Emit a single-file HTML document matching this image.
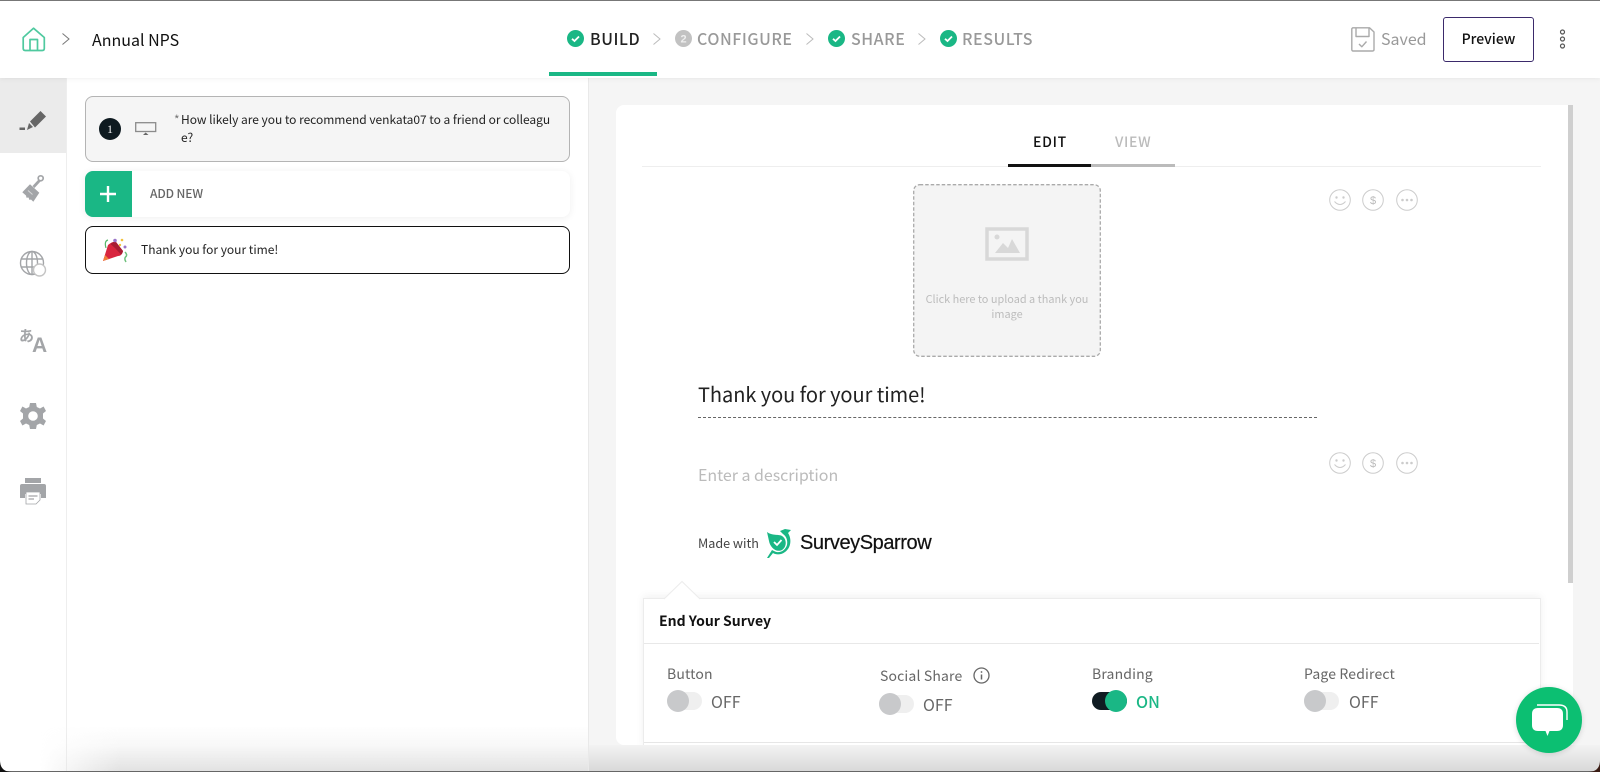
<!DOCTYPE html>
<html lang="en">
<head>
<meta charset="utf-8">
<title>Annual NPS</title>
<style>
html,body{margin:0;padding:0;background:#fff}
body{width:1600px;height:772px;position:relative;overflow:hidden;font-family:"Noto Sans CJK SC","Liberation Sans",sans-serif;color:#111}
.a{position:absolute}
.t{position:absolute;white-space:nowrap;line-height:20px;height:20px}
.step{font-size:16px;font-weight:500;letter-spacing:.55px;color:#999}
.lbl{font-size:14px;color:#666;letter-spacing:.15px}
.off{font-size:16px;color:#666}
.track{position:absolute;width:35px;height:18px;border-radius:9px;background:#efefef}
.knob{position:absolute;width:22px;height:22px;border-radius:50%;background:#c8c9cb}
svg{position:absolute;overflow:visible}
</style>
</head>
<body>
<!-- backgrounds -->
<div class="a" style="left:589px;top:78px;width:1011px;height:694px;background:#f5f5f5"></div>
<div class="a" style="left:66px;top:78px;width:1px;height:694px;background:#eee"></div>
<div class="a" style="left:588px;top:78px;width:1px;height:694px;background:#e9e9e9"></div>
<div class="a" style="left:0;top:78px;width:66px;height:75px;background:#ebebeb"></div>
<div class="a" style="left:0;top:0;width:1600px;height:78px;background:#fff;box-shadow:0 1px 5px rgba(0,0,0,.06)"></div>
<div class="a" style="left:0;top:0;width:1600px;height:1px;background:#777"></div>

<!-- header left -->
<svg style="left:22px;top:27px" width="24" height="25" viewBox="0 0 24 25" fill="none" stroke="#4fc99f" stroke-width="1.7" stroke-linejoin="round"><path d="M1.2 10.5 11.5 1.2 22.3 10.5V21.5q0 2-2 2H3.2q-2 0-2-2Z"/><path d="M8 23.5V12.5H15.5V23.5"/></svg>
<svg style="left:62px;top:33px" width="8" height="12" fill="none" stroke="#777" stroke-width="1"><path d="M.5.5 7 6 .5 11.5"/></svg>
<div class="t" style="left:92px;top:29px;font-size:16px">Annual NPS</div>

<!-- stepper -->
<svg style="left:567px;top:30px" width="17" height="17"><circle cx="8.500" cy="8.500" r="8.500" fill="#1ab785"/><path d="M5 8.800 7.500 11 12 6.500" fill="none" stroke="#fff" stroke-width="1.800"/></svg>
<div class="t step" style="left:590px;top:28px;color:#222">BUILD</div>
<svg style="left:653px;top:33px" width="8" height="12" fill="none" stroke="#bbb" stroke-width="1"><path d="M.5.5 7 6 .5 11.5"/></svg>
<svg style="left:675px;top:30px" width="17" height="17"><circle cx="8.500" cy="8.500" r="8.500" fill="#c2c2c2"/><text x="8.500" y="12.500" font-size="11" font-weight="700" text-anchor="middle" fill="#eee" font-family="Liberation Sans, sans-serif">2</text></svg>
<div class="t step" style="left:697px;top:28px">CONFIGURE</div>
<svg style="left:806px;top:33px" width="8" height="12" fill="none" stroke="#bbb" stroke-width="1"><path d="M.5.5 7 6 .5 11.5"/></svg>
<svg style="left:828px;top:30px" width="17" height="17"><circle cx="8.500" cy="8.500" r="8.500" fill="#1ab785"/><path d="M5 8.800 7.500 11 12 6.500" fill="none" stroke="#fff" stroke-width="1.800"/></svg>
<div class="t step" style="left:851px;top:28px">SHARE</div>
<svg style="left:918px;top:33px" width="8" height="12" fill="none" stroke="#bbb" stroke-width="1"><path d="M.5.5 7 6 .5 11.5"/></svg>
<svg style="left:940px;top:30px" width="17" height="17"><circle cx="8.500" cy="8.500" r="8.500" fill="#1ab785"/><path d="M5 8.800 7.500 11 12 6.500" fill="none" stroke="#fff" stroke-width="1.800"/></svg>
<div class="t step" style="left:962px;top:28px">RESULTS</div>
<div class="a" style="left:549px;top:72px;width:108px;height:4px;background:#1ab785"></div>

<!-- header right -->
<svg style="left:1351px;top:27px" width="24" height="25" fill="none" stroke="#aaa" stroke-width="1.400" stroke-linejoin="round"><path d="M1.700.8H18.500L23 5V22.500q0 1.500-1.500 1.500H2.200Q.8 24 .8 22.500V1.700Z"/><path d="M5 1V9.500H18V1"/><path d="M8 17 10.800 19.800 15.500 14.500"/></svg>
<div class="t" style="left:1381px;top:28px;font-size:16px;color:#999">Saved</div>
<div class="a" style="left:1443px;top:17px;width:89px;height:43px;border:1px solid #3b2a6b;border-radius:3px;text-align:center;line-height:42px;font-size:14px;font-weight:500;color:#111">Preview</div>
<svg style="left:1558px;top:29px" width="9" height="20" fill="none" stroke="#555" stroke-width="1.200"><circle cx="4.500" cy="3" r="2"/><circle cx="4.500" cy="10" r="2"/><circle cx="4.500" cy="17" r="2"/></svg>

<!-- sidebar icons -->
<svg style="left:18px;top:103px" width="30" height="30" fill="#666"><path d="M1.500 24.500H7V27H1.500Z"/><path d="M9 27 11 20 15 24Z"/><path d="M12 18.500 22.500 8 28 13.500 17 24.500Z"/></svg>
<svg style="left:20px;top:172px" width="28" height="32"><path d="M2.300 20.300 10 12.300 19.300 20.700 13.300 29.700 11 27.500 9.500 28 8.500 25.500 6.500 25.800 6 23.500Z" fill="#a3a5a8"/><path d="M12.500 14 14.500 16 20.500 9.500 18.500 7.500Z" fill="#a3a5a8"/><circle cx="20.700" cy="6.300" r="2.500" fill="none" stroke="#a3a5a8" stroke-width="1.700"/><path d="M8 18.500 12.500 22.500" stroke="#fff" stroke-width="1" opacity=".55"/></svg>
<svg style="left:19px;top:250px" width="30" height="30" fill="none" stroke="#a3a5a8" stroke-width="1.400"><circle cx="13" cy="13" r="11.500"/><ellipse cx="13" cy="13" rx="5.500" ry="11.500"/><path d="M2 9H24M2 17H24M13 1.500V24.500"/><circle cx="20.500" cy="20" r="6" fill="#fff" stroke="#c4c4c4"/></svg>
<div class="t" style="left:19px;top:326px;font-size:15px;font-weight:700;color:#a3a5a8">あ</div>
<div class="t" style="left:32px;top:336px;font-size:21px;font-weight:700;color:#a3a5a8;font-family:'Liberation Sans',sans-serif">A</div>
<svg style="left:19px;top:402px" width="28" height="28" viewBox="0 0 28 28"><path fill="#a3a5a8" fill-rule="evenodd" d="M11 1H17L17.800 5 21 6.500 24.600 4.500 27 9 24 11.500V16.500L27 19 24.600 23.500 21 21.500 17.800 23 17 27H11L10.200 23 7 21.500 3.400 23.500 1 19 4 16.500V11.500L1 9 3.400 4.500 7 6.500 10.200 5ZM14 9.200A4.800 4.800 0 1 0 14 18.800 4.800 4.800 0 1 0 14 9.200Z"/></svg>
<svg style="left:19px;top:477px" width="28" height="28" viewBox="0 0 28 28"><path fill="#a3a5a8" d="M6 1H22V6H6Z"/><path fill="#a3a5a8" d="M3 7H25Q27 7 27 9V21H22V17H6V21H1V9Q1 7 3 7Z"/><path fill="#fff" stroke="#a3a5a8" stroke-width=".8" d="M7 15H21V23L17 27H7Z"/><path stroke="#a3a5a8" stroke-width="1.200" d="M9.500 19H18.500M9.500 22H15"/></svg>

<!-- question card -->
<div class="a" style="left:85px;top:96px;width:483px;height:64px;background:#f5f5f5;border:1px solid #b4b4b4;border-radius:8px"></div>
<div class="a" style="left:99px;top:118px;width:22px;height:22px;border-radius:50%;background:#0e1a20;color:#f2f2f2;text-align:center;font:400 12px/22px 'Liberation Serif',serif">1</div>
<svg style="left:135px;top:122px" width="22" height="14" fill="none"><rect x=".7" y=".7" width="20" height="8.800" stroke="#8b8b8b" stroke-width="1.300"/><path d="M8 13 10.700 10.500 13.500 13Z" fill="#666"/></svg>
<div class="t" style="left:174px;top:110px;font-size:12px;color:#777">*</div>
<div class="t" style="left:181px;top:110px;font-size:12px;color:#222;letter-spacing:-.03px">How likely are you to recommend venkata07 to a friend or colleagu</div>
<div class="t" style="left:181px;top:128px;font-size:12px;color:#222">e?</div>

<!-- add new -->
<div class="a" style="left:85px;top:171px;width:485px;height:46px;background:#fff;border-radius:8px;box-shadow:0 1px 8px rgba(0,0,0,.07)"></div>
<div class="a" style="left:85px;top:171px;width:47px;height:46px;background:#1ab785;border-radius:8px 0 0 8px"></div>
<svg style="left:100px;top:186px" width="16" height="16" fill="none" stroke="#fff" stroke-width="2.400"><path d="M8 0V16M0 8H16"/></svg>
<div class="t" style="left:150px;top:184px;font-size:12px;font-weight:500;color:#666;letter-spacing:-.1px">ADD NEW</div>

<!-- thank you card -->
<div class="a" style="left:85px;top:226px;width:483px;height:46px;background:#fff;border:1px solid #111;border-radius:8px"></div>
<svg style="left:102px;top:238px" width="26" height="26"><path d="M1 23 6 7Q11 3 14 4L21 13Q20 18 16 18Z" fill="#d8253f"/><path d="M8.500 6Q11 3.500 14 4L21 13Q20.500 15.500 19 16.500L13 10Z" fill="#a81c33"/><path d="M3 17 7 21 1 23Z" fill="#ef7f3a"/><path d="M4 10Q2 3 6 2" fill="none" stroke="#55b86a" stroke-width="1.200"/><circle cx="13" cy="2.500" r="1.800" fill="#9a75c9"/><circle cx="20" cy="2" r="1.300" fill="#f2c13c"/><circle cx="23" cy="9" r="1.500" fill="#9a75c9"/><circle cx="18" cy="7" r="1.200" fill="#f2c13c"/><path d="M23 14Q26 17 23.500 19Q22 21 24 24" fill="none" stroke="#6fc07d" stroke-width="1.500"/></svg>
<div class="t" style="left:141px;top:240px;font-size:12px;color:#222">Thank you for your time!</div>

<!-- main panel -->
<div class="a" style="left:616px;top:105px;width:952px;height:640px;background:#fff;border-radius:8px 0 0 8px"></div>
<div class="a" style="left:1568px;top:105px;width:5px;height:478px;background:#cfcfcf"></div>
<div class="a" style="left:1568px;top:583px;width:5px;height:162px;background:#fff"></div>
<div class="a" style="left:642px;top:166px;width:899px;height:1px;background:#eee"></div>
<div class="a" style="left:1008px;top:164px;width:83px;height:3px;background:#111"></div>
<div class="a" style="left:1091px;top:164px;width:84px;height:3px;background:#bbb"></div>
<div class="t" style="left:1033px;top:132px;font-size:14px;font-weight:500;letter-spacing:.7px;color:#111">EDIT</div>
<div class="t" style="left:1115px;top:132px;font-size:14px;font-weight:500;letter-spacing:.7px;color:#bbb">VIEW</div>

<!-- upload -->
<svg style="left:913px;top:184px" width="188" height="173"><rect x=".7" y=".7" width="186.600" height="171.600" rx="6" fill="#f4f4f4" stroke="#aaa" stroke-width="1.300" stroke-dasharray="3.500 2"/></svg>
<svg style="left:985px;top:227px" width="45" height="34"><rect x="2" y="2" width="40" height="30" fill="none" stroke="#d8d8d8" stroke-width="3.500"/><circle cx="12" cy="10" r="2.500" fill="#d8d8d8"/><path d="M10 26 18 16 23 21 27 12 35 26Z" fill="#d8d8d8"/></svg>
<div class="a" style="left:913px;top:292px;width:188px;text-align:center;font-size:10.900px;line-height:14.500px;color:#bcbcbc">Click here to upload a thank you<br>image</div>

<!-- emoji rows -->
<svg style="left:1329px;top:189px" width="90" height="22" fill="none" stroke="#ccc" stroke-width="1"><circle cx="11" cy="11" r="10.300"/><circle cx="7.500" cy="8.500" r=".7" fill="#ccc"/><circle cx="14.500" cy="8.500" r=".7" fill="#ccc"/><path d="M5.500 12.500Q11 18.500 16.500 12.500"/><circle cx="44" cy="11" r="10.300"/><circle cx="78" cy="11" r="10.300"/><circle cx="73.500" cy="11" r=".8" fill="#ccc"/><circle cx="78" cy="11" r=".8" fill="#ccc"/><circle cx="82.500" cy="11" r=".8" fill="#ccc"/><text x="44" y="15" text-anchor="middle" font-size="11" fill="#bbb" stroke="none" font-family="Liberation Sans, sans-serif">$</text></svg>
<svg style="left:1329px;top:452px" width="90" height="22" fill="none" stroke="#ccc" stroke-width="1"><circle cx="11" cy="11" r="10.300"/><circle cx="7.500" cy="8.500" r=".7" fill="#ccc"/><circle cx="14.500" cy="8.500" r=".7" fill="#ccc"/><path d="M5.500 12.500Q11 18.500 16.500 12.500"/><circle cx="44" cy="11" r="10.300"/><circle cx="78" cy="11" r="10.300"/><circle cx="73.500" cy="11" r=".8" fill="#ccc"/><circle cx="78" cy="11" r=".8" fill="#ccc"/><circle cx="82.500" cy="11" r=".8" fill="#ccc"/><text x="44" y="15" text-anchor="middle" font-size="11" fill="#bbb" stroke="none" font-family="Liberation Sans, sans-serif">$</text></svg>

<!-- title -->
<div class="t" style="left:698px;top:379px;height:30px;line-height:30px;font-size:20px;letter-spacing:-.05px;color:#222">Thank you for your time!</div>
<div class="a" style="left:698px;top:417px;width:619px;height:0;border-top:1px dashed #666"></div>
<div class="t" style="left:698px;top:464px;font-size:16px;color:#bbb;letter-spacing:-.03px">Enter a description</div>

<!-- made with -->
<div class="t" style="left:698px;top:533px;font-size:12.600px;color:#444">Made with</div>
<svg style="left:766px;top:528px" width="28" height="31" viewBox="0 0 28 31"><path d="M1 4C6 8 13 6 16 8 21 11 21 19 16 22 10 25 4 19 3 13Z" fill="#1ab785"/><path d="M8 14 11 17 15.500 12" fill="none" stroke="#fff" stroke-width="1.800"/><path d="M14 3 19 1 25 2 22 5C26 11 25 20 19 24 15 27 10 27 7 25L3 30 1 30 6 22 8 23C13 26 19 23 21 17 22 12 20 8 17 6Z" fill="#1ab785"/></svg>
<div class="t" style="left:800px;top:531px;height:24px;line-height:24px;font-size:20px;color:#111;font-family:'Liberation Sans',sans-serif;letter-spacing:-.42px;-webkit-text-stroke:.2px #111">SurveySparrow</div>

<!-- end panel -->
<div class="a" style="left:643px;top:598px;width:896px;height:150px;background:#fff;border:1px solid #ececec;border-bottom:0;box-shadow:0 -2px 8px rgba(0,0,0,.06)"></div>
<svg style="left:664px;top:581px" width="36" height="19"><path d="M0 18 18 .5 36 18Z" fill="#fff"/><path d="M0 18 18 .5 36 18" fill="none" stroke="#ececec"/></svg>
<div class="t" style="left:659px;top:611px;font-size:14px;font-weight:700;color:#111">End Your Survey</div>
<div class="a" style="left:644px;top:643px;width:895px;height:1px;background:#e8e8e8"></div>

<div class="t lbl" style="left:667px;top:664px">Button</div>
<div class="track" style="left:667px;top:692px"></div><div class="knob" style="left:667px;top:690px"></div>
<div class="t off" style="left:711px;top:691px">OFF</div>

<div class="t lbl" style="left:880px;top:666px">Social Share</div>
<svg style="left:973px;top:667px" width="17" height="17" fill="none" stroke="#666" stroke-width="1.300"><circle cx="8.500" cy="8.500" r="7.500"/><path d="M8.500 7.500V12.500" stroke-width="1.500"/><circle cx="8.500" cy="5" r=".9" fill="#666" stroke="none"/></svg>
<div class="track" style="left:879px;top:695px"></div><div class="knob" style="left:879px;top:693px"></div>
<div class="t off" style="left:923px;top:694px">OFF</div>

<div class="t lbl" style="left:1092px;top:664px">Branding</div>
<div class="track" style="left:1092px;top:692px;background:#101c22"></div><div class="knob" style="left:1105px;top:690px;background:#1ab785"></div>
<div class="t off" style="left:1136px;top:691px;color:#1ab785;font-weight:500">ON</div>

<div class="t lbl" style="left:1304px;top:664px">Page Redirect</div>
<div class="track" style="left:1304px;top:692px"></div><div class="knob" style="left:1304px;top:690px"></div>
<div class="t off" style="left:1349px;top:691px">OFF</div>

<div class="a" style="left:644px;top:742px;width:895px;height:1px;background:#e6e6e6"></div>

<!-- bottom fade -->
<div class="a" style="left:40px;top:725px;width:548px;height:46px;background:linear-gradient(rgba(226,226,226,0),rgba(226,226,226,.25) 45%,rgba(226,226,226,1));-webkit-mask-image:linear-gradient(90deg,transparent 0,#000 80px);mask-image:linear-gradient(90deg,transparent 0,#000 80px)"></div>
<div class="a" style="left:589px;top:745px;width:1011px;height:26px;background:linear-gradient(#f3f3f3,#d9d9d9)"></div>
<div class="a" style="left:0;top:771px;width:1600px;height:1px;background:#666"></div>
<svg style="left:0;top:760px" width="12" height="12"><path d="M0 0V12H12Q0 12 0 0Z" fill="#111"/></svg>
<svg style="left:1588px;top:760px" width="12" height="12"><path d="M12 0V12H0Q12 12 12 0Z" fill="#3a1c14"/></svg>

<!-- chat -->
<div class="a" style="left:1516px;top:687px;width:66px;height:66px;border-radius:50%;background:#0cbf72;box-shadow:0 1px 6px rgba(0,0,0,.15)"></div>
<svg style="left:1531px;top:702px" width="38" height="36" fill="none"><path d="M6 3H28Q36 3 36 10V18" stroke="#fff" stroke-width="1.400"/><path d="M7 6H26Q32 6 32 12V23Q32 29 26 29H18.500L16.500 34 14.500 29H7Q1 29 1 23V12Q1 6 7 6Z" fill="#fff"/></svg>
</body>
</html>
